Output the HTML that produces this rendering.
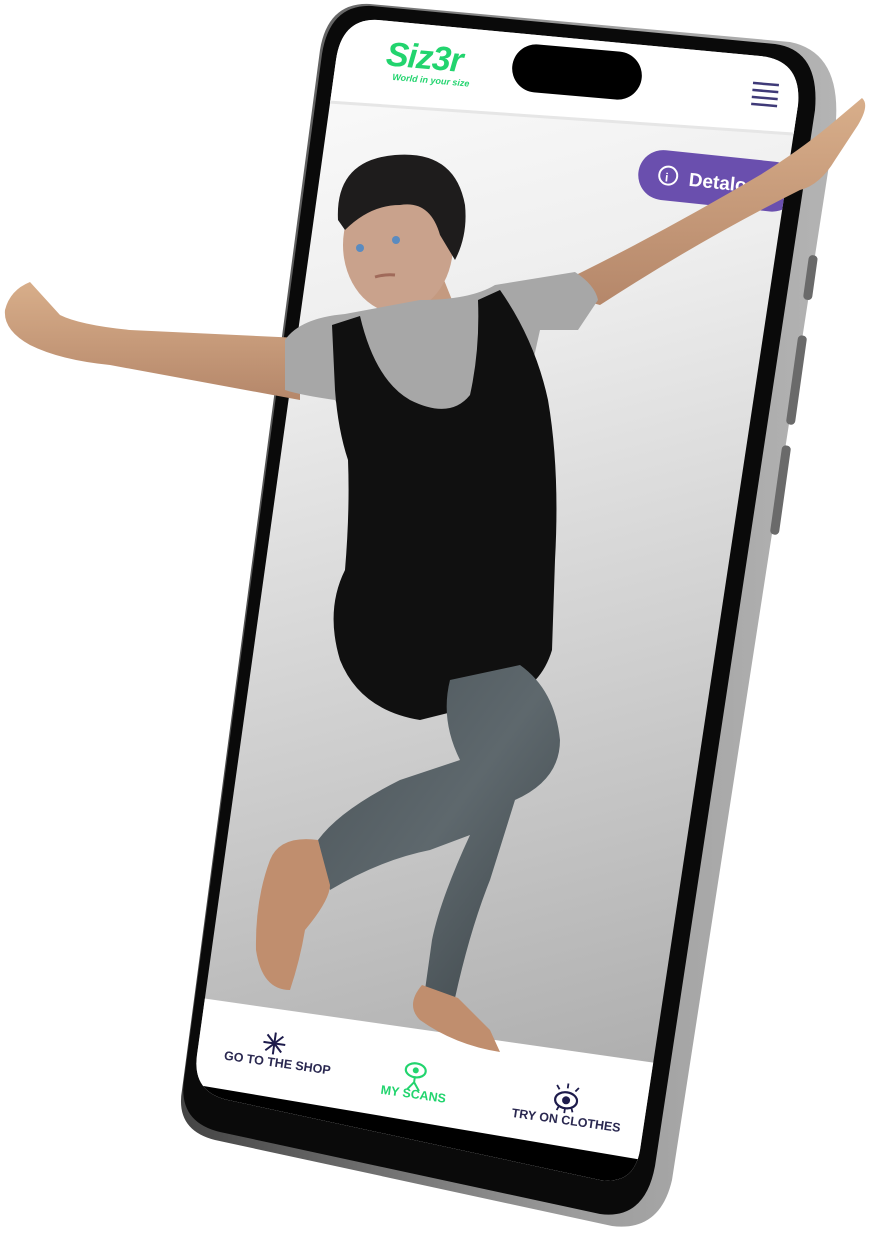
<!DOCTYPE html>
<html><head><meta charset="utf-8"><style>
html,body{margin:0;padding:0;background:#fff;width:870px;height:1236px;overflow:hidden}
svg{display:block;overflow:hidden}
text{font-family:"Liberation Sans",sans-serif;font-weight:bold}
</style></head><body>
<svg width="870" height="1236" viewBox="0 0 870 1236" xmlns="http://www.w3.org/2000/svg">
<defs>
<linearGradient id="bg" x1="0" y1="0" x2="0.15" y2="1">
<stop offset="0" stop-color="#ffffff"/><stop offset="0.3" stop-color="#eeeeee"/><stop offset="1" stop-color="#a9a9a9"/>
</linearGradient>
<linearGradient id="silver" x1="0" y1="0" x2="1" y2="0">
<stop offset="0" stop-color="#444"/><stop offset="0.6" stop-color="#9c9c9c"/><stop offset="1" stop-color="#b4b4b4"/>
</linearGradient>
<linearGradient id="skin" x1="0" y1="0" x2="0" y2="1">
<stop offset="0" stop-color="#d8ae8a"/><stop offset="1" stop-color="#b5876a"/>
</linearGradient>
<linearGradient id="leg" x1="0" y1="0" x2="1" y2="1">
<stop offset="0" stop-color="#4a5358"/><stop offset="0.5" stop-color="#5e686d"/><stop offset="1" stop-color="#3c4448"/>
</linearGradient>
<clipPath id="scr"><path d="M378,20 L760,56 Q802,60 798,105 L640,1150 Q634,1185 600,1180 L228,1100 Q192,1092 197,1055 L336,60 Q342,18 378,20 Z"/></clipPath>
</defs>
<path d="M370,4 L790,42 Q840,52 836,120 L672,1180 Q660,1232 612,1226 L215,1140 Q175,1130 182,1090 L320,50 Q328,2 370,4 Z" fill="url(#silver)"/>
<path d="M372,6 L775,44 Q820,50 815,110 L655,1166 Q645,1220 600,1214 L220,1132 Q178,1122 184,1080 L322,54 Q330,4 372,6 Z" fill="#0a0a0a"/>
<rect x="806" y="255" width="9" height="45" rx="4" fill="#6a6a6a" transform="rotate(8 810 277)"/>
<rect x="792" y="335" width="9" height="90" rx="4" fill="#6a6a6a" transform="rotate(8 796 380)"/>
<rect x="776" y="445" width="9" height="90" rx="4" fill="#6a6a6a" transform="rotate(8 780 490)"/>
<g clip-path="url(#scr)">
<rect x="180" y="0" width="700" height="1236" fill="url(#bg)"/>
<path d="M300,0 L880,0 L880,140 L300,100 Z" fill="#fff"/>
<path d="M300,100 L880,140" stroke="#e6e6e6" stroke-width="3"/>
<g transform="rotate(5 440 60)">
<text x="386" y="70" font-size="34" fill="#22d46e" font-style="italic" letter-spacing="-1">Siz3r</text>
<text x="394" y="84" font-size="9" fill="#22d46e" font-style="italic">World in your size</text>
</g>
<rect x="512" y="48" width="130" height="48" rx="24" fill="#000" transform="rotate(5 577 72)"/>
<g stroke="#3f3a78" stroke-width="2.5" transform="rotate(5 765 95)">
<line x1="752" y1="84" x2="778" y2="84"/><line x1="752" y1="91" x2="778" y2="91"/>
<line x1="752" y1="98" x2="778" y2="98"/><line x1="752" y1="105" x2="778" y2="105"/>
</g>
<g transform="rotate(6 710 180)">
<rect x="638" y="155" width="160" height="50" rx="25" fill="#6a4fae"/>
<circle cx="668" cy="180" r="9" fill="none" stroke="#fff" stroke-width="2"/>
<text x="665" y="186" font-size="12" fill="#fff">i</text>
<text x="689" y="188" font-size="19" fill="#fff">Detalo</text>
</g>
<path d="M180,995 L880,1095 L880,1236 L180,1236 Z" fill="#fff"/>
<path d="M180,1082 L880,1200 L880,1236 L180,1236 Z" fill="#000"/>
<path d="M330,1125 L485,1160" stroke="#555" stroke-width="5" stroke-linecap="round"/>
<path d="M330,1125 L485,1160" stroke="#000" stroke-width="2.5" stroke-linecap="round"/>
<g transform="rotate(8 270 1060)">
<g stroke="#1d1b4b" stroke-width="2"><line x1="272" y1="1032" x2="272" y2="1054"/><line x1="261" y1="1043" x2="283" y2="1043"/><line x1="264" y1="1035" x2="280" y2="1051"/><line x1="280" y1="1035" x2="264" y2="1051"/></g>
<text x="224" y="1066" font-size="12.5" fill="#2a2850">GO TO THE SHOP</text>
</g>
<g transform="rotate(8 412 1090)">
<ellipse cx="413" cy="1070" rx="10" ry="7" fill="none" stroke="#22d46e" stroke-width="2.2"/>
<circle cx="413" cy="1070" r="3" fill="#22d46e"/>
<path d="M413,1077 L413,1082 M413,1082 L407,1090 M413,1082 L419,1090" stroke="#22d46e" stroke-width="2"/>
<text x="381" y="1098" font-size="12.5" fill="#22d46e">MY SCANS</text>
</g>
<g transform="rotate(8 563 1115)">
<ellipse cx="564" cy="1100" rx="11" ry="8" fill="none" stroke="#1d1b4b" stroke-width="2.2"/>
<circle cx="564" cy="1100" r="4" fill="#1d1b4b"/>
<path d="M556,1090 L553,1086 M564,1088 L564,1083 M572,1090 L575,1086 M564,1108 L564,1113 M558,1106 L556,1111 M570,1106 L572,1111" stroke="#1d1b4b" stroke-width="1.8"/>
<text x="512" y="1124" font-size="12.5" fill="#2a2850">TRY ON CLOTHES</text>
</g>
</g>
<path d="M545,290 Q650,240 760,175 Q800,150 830,125 L862,98 Q870,105 858,125 L835,160 Q820,185 800,190 Q700,240 600,305 Z" fill="url(#skin)"/>
<path d="M300,338 L130,330 Q80,325 60,315 L30,282 Q10,290 5,310 Q3,330 30,345 Q60,360 110,365 L300,400 Z" fill="url(#skin)"/>
<path d="M390,270 L440,270 L460,320 L395,320 Z" fill="#c49a80"/>
<ellipse cx="398" cy="245" rx="55" ry="68" fill="#c9a28c"/>
<path d="M338,220 Q335,160 395,155 Q455,150 465,205 Q468,235 455,260 L440,235 Q430,200 400,205 Q370,205 345,230 Z" fill="#1e1c1c"/>
<circle cx="360" cy="248" r="4" fill="#5a8bc0"/><circle cx="396" cy="240" r="4" fill="#5a8bc0"/>
<path d="M375,277 Q385,274 395,275" stroke="#a06a5a" stroke-width="3" fill="none"/>
<path d="M285,340 Q300,318 345,314 L420,300 Q470,300 495,285 L575,272 Q595,285 598,300 L578,330 L540,330 L520,420 L345,420 L335,400 Q300,395 285,390 Z" fill="#a7a7a7"/>
<path d="M332,325 L360,316 Q375,380 410,400 Q450,420 470,395 Q480,350 478,300 L500,290 Q535,340 548,400 Q560,470 555,560 L552,650 Q540,690 500,700 L420,720 Q360,710 340,660 Q325,610 345,570 Q350,510 348,460 Q338,430 335,390 Z" fill="#101010"/>
<path d="M515,800 Q560,780 560,740 Q555,690 520,665 L450,680 Q440,720 460,760 L400,780 Q340,810 318,840 L330,890 Q380,860 430,850 L470,835 Q440,900 432,940 L425,990 L455,998 Q470,930 490,880 Z" fill="url(#leg)"/>
<path d="M318,840 Q280,835 270,860 Q255,900 256,950 Q262,990 290,990 Q300,960 305,930 Q330,900 330,885 Z" fill="#c08e6e"/>
<path d="M422,985 Q405,1005 420,1020 Q455,1045 500,1052 L490,1030 Q470,1010 458,998 Z" fill="#c08e6e"/>
</svg>
</body></html>
